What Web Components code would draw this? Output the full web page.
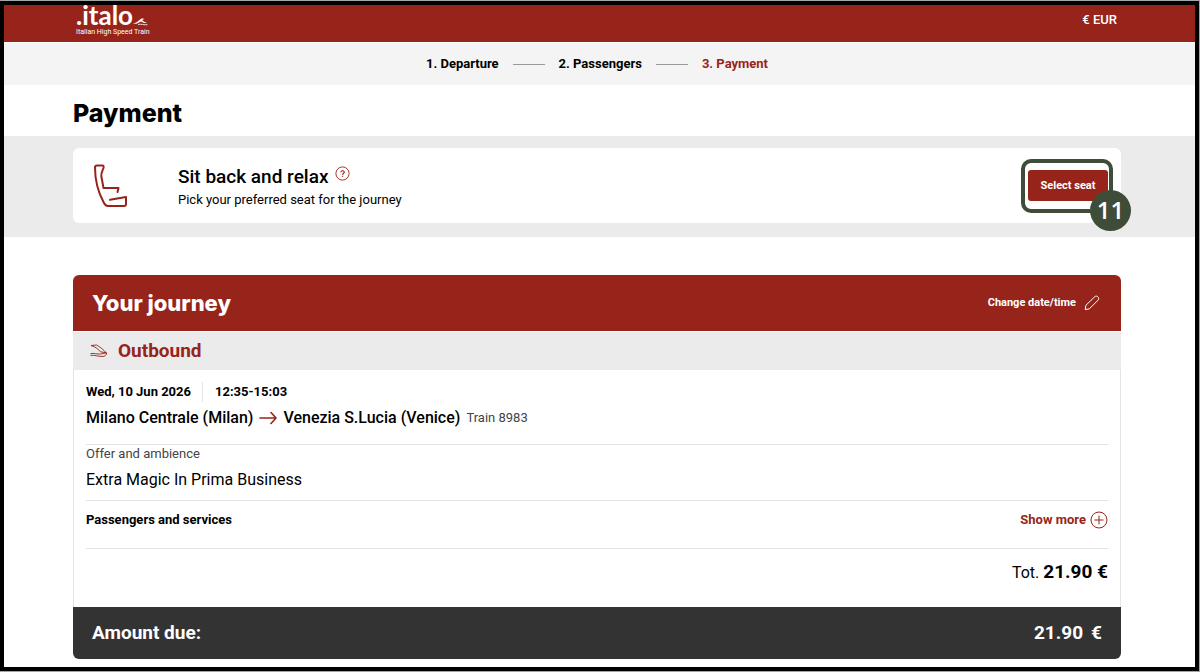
<!DOCTYPE html>
<html lang="en">
<head>
<meta charset="utf-8">
<title>Italo – Payment</title>
<style>
  :root { --red: #97241a; --band: #ebebeb; --line: #e4e4e4; --start: 69px; --end: 74px; }
  html { background: #a4a6a3; }
  body { margin: 0; padding: 1px 1px 1px 0; font: 13px/18px Roboto, sans-serif; color: #000; }
</style>
</head>
<body>
<booking-page>
  <site-header slot="header" currency="€ EUR"></site-header>
  <step-bar slot="header"></step-bar>
  <page-title>Payment</page-title>
  <seat-banner>
    <span slot="title">Sit back and relax</span>
    <span slot="text">Pick your preferred seat for the journey</span>
    <callout-mark slot="action" number="11"><red-button>Select seat</red-button></callout-mark>
  </seat-banner>
  <journey-card>
    <span slot="heading">Your journey</span>
    <journey-leg date="Wed, 10 Jun 2026" time="12:35-15:03" from="Milano Centrale (Milan)" to="Venezia S.Lucia (Venice)" train="Train 8983"></journey-leg>
    <journey-offer>
      <span slot="label">Offer and ambience</span>
      <span>Extra Magic In Prima Business</span>
    </journey-offer>
    <passenger-services>Passengers and services</passenger-services>
    <journey-total>21.90 €</journey-total>
    <amount-due slot="footer" amount="21.90" currency="€">Amount due:</amount-due>
  </journey-card>
</booking-page>

<script>
const define = (name, render) => customElements.define(name, class extends HTMLElement {
  constructor() { super(); this.attachShadow({ mode: 'open' }); }
  connectedCallback() {
    const template = document.createElement('template');
    template.innerHTML = `<style>
      * { box-sizing: border-box; }
      :host { display: block; box-sizing: border-box; }
      h1, h2, h3, p, ol { margin: 0; padding: 0; font-size: inherit; }
      button { font: inherit; color: inherit; background: none; border: 0; padding: 0; cursor: pointer; }
      svg { display: block; flex: none; fill: none; stroke: currentColor; }
    </style>` + render(this);
    this.shadowRoot.replaceChildren(template.content.cloneNode(true));
  }
});

define('booking-page', () => `
  <style>
    :host { background: #fff; border: 4px solid #000; min-height: calc(100vh - 2px); }
    main { padding-bottom: 8px; }
  </style>
  <slot name="header"></slot>
  <main><slot></slot></main>`);

define('site-header', el => `
  <style>
    :host { background: var(--red); color: #fff; }
    header { display: flex; justify-content: space-between; align-items: flex-start; height: 37px; padding: 0 78px 0 72px; }
    a { color: inherit; text-decoration: none; display: block; }
    .name { display: flex; align-items: flex-end; font: 700 26px/21px Lato, sans-serif; }
    .tag { display: block; font-size: 7px; line-height: 12px; }
    button { font-weight: 500; line-height: 29px; }
  </style>
  <header>
    <a href="#"><span class="name">.italo<svg width="15" height="9" viewBox="0 0 15 9" aria-hidden="true"><path d="M0 6.500C4 6 5.500 3.500 8.500 1.500l3 .300-2.500 1.500c2 1.500 3.500 2.500 6 2.700-3 .400-5.500-.700-7-1.600C5.500 5.500 3.500 7.500 0 6.500z" fill="currentColor" stroke="none"/><path d="M5 7.500c3-.900 6 .700 9.500.200" stroke-width=".8"/></svg></span>
    <span class="tag">Italian High Speed Train</span></a>
    <button type="button">${el.getAttribute('currency')}</button>
  </header>`);

define('step-bar', () => `
  <style>
    :host { background: #f4f4f4; margin-top: 1px; padding: 0 var(--end) 0 var(--start); }
    ol { list-style: none; display: flex; justify-content: center; align-items: center; gap: 14px; line-height: 42px; font-weight: 700; }
    li { display: flex; align-items: center; gap: 14px; }
    li + li::before { content: ""; width: 32px; height: 1px; background: #999; }
    [aria-current] { color: var(--red); }
  </style>
  <nav aria-label="Booking steps"><ol>
    <li>1. Departure</li><li>2. Passengers</li><li aria-current="step">3. Payment</li>
  </ol></nav>`);

define('page-title', () => `
  <style>
    :host { padding: 13px var(--end) 7px var(--start); }
    h1 { font: 800 25px/31px Inter, sans-serif; }
  </style>
  <h1><slot></slot></h1>`);

define('seat-banner', () => `
  <style>
    :host { background: var(--band); padding: 12px var(--end) 14px var(--start); }
    section { display: flex; align-items: center; min-height: 75px; padding: 0 13px 0 20px; background: #fff; border-radius: 6px; }
    .seat { color: var(--red); margin-right: 49px; }
    .copy { flex: 1; padding-top: 2px; }
    .row { display: flex; align-items: flex-start; gap: 7px; }
    h2 { font-weight: 500; font-size: 19px; line-height: 26px; }
    p { line-height: 20px; }
    .help { color: var(--red); padding-top: 2px; }
  </style>
  <section>
    <svg class="seat" width="36" height="44" viewBox="0 0 36 44" stroke-width="2" stroke-linejoin="round" stroke-linecap="round" aria-hidden="true">
      <path d="M2 3.500Q2 1.500 4 1.500H9.500Q11 1.500 10.500 4C9.500 7 8 9 8.300 12L10.500 24H25.500L24.500 28M17 35.800L33 33V40Q33 42 31 42H15Q12.500 42 11 39C6 30 2 18 2 3.500"/>
    </svg>
    <div class="copy">
      <div class="row"><h2><slot name="title"></slot></h2>
        <button class="help" type="button" aria-label="Help">
          <svg width="15" height="15" viewBox="0 0 15 15"><circle cx="7.500" cy="7.500" r="6.600" stroke-width=".9"/><path d="M5.900 6.300c0-2.100 3.400-2.100 3.300 0 0 1.200-1.600 1.100-1.600 2.400M7.600 9.700v1.100" stroke-width="1.200"/></svg>
        </button>
      </div>
      <p><slot name="text"></slot></p>
    </div>
    <slot name="action"></slot>
  </section>`);

define('red-button', () => `
  <style>
    button { display: block; min-width: 80px; padding: 0 12px; background: var(--red); color: #fff; border-radius: 3px; font-weight: 700; font-size: 11px; line-height: 31px; white-space: nowrap; }
  </style>
  <button type="button"><slot></slot></button>`);

/* Tutorial marker: a ring round the slotted control and a numbered badge on its corner. */
define('callout-mark', el => `
  <style>
    :host { position: relative; }
    .ring { position: absolute; inset: -11px -5px -12px -7px; border: 4px solid #3f4c38; border-radius: 10px; pointer-events: none; }
    .badge { position: absolute; right: -23px; bottom: -30px; width: 41px; height: 41px; border-radius: 50%; background: #3f4c38; color: #fff; text-align: center; font: 600 24px/40px "Open Sans", sans-serif; }
  </style>
  <slot></slot><div class="ring"></div><div class="badge">${el.getAttribute('number')}</div>`);

define('journey-card', () => `
  <style>
    :host { padding: 38px var(--end) 0 var(--start); }
    article { border-radius: 6px; overflow: hidden; }
    header { display: flex; justify-content: space-between; align-items: center; height: 56px; padding: 0 21px 0 19px; background: var(--red); color: #fff; }
    h2 { font: 800 22px/28px Inter, sans-serif; }
    header button { display: flex; align-items: center; gap: 8px; font-weight: 700; font-size: 11px; }
    .out { display: flex; align-items: center; gap: 10px; height: 38px; margin-top: 1px; padding: 0 17px; background: var(--band); color: var(--red); }
    h3 { font-weight: 700; font-size: 19px; line-height: 38px; }
    .body { padding: 0 12px; border: solid var(--line); border-width: 0 1px; }
  </style>
  <article>
    <header><h2><slot name="heading"></slot></h2>
      <button type="button">Change date/time
        <svg width="16" height="16" viewBox="0 0 16 16" stroke-linejoin="round"><path d="M1.200 14.600L1.900 10.300 10.900 1.600C12.800-.100 16 2.900 14.200 5L5.300 13.900z"/></svg>
      </button>
    </header>
    <div class="out">
      <svg width="18" height="14" viewBox="0 0 18 14" stroke-width=".9" stroke-linejoin="round" aria-hidden="true"><path d="M1 1.500L6.500 1C10 3 14 6 16.300 8.800L10.500 7.800C8.500 5.500 6 3 1 1.500zM.5 9.600C4 9 7 10.200 10.500 10L16.300 8.800 16.600 10.300 14 12.400C8 12.800 5 10.700.5 11.400"/></svg>
      <h3>Outbound</h3>
    </div>
    <div class="body"><slot></slot></div>
    <slot name="footer"></slot>
  </article>`);

define('journey-leg', el => `
  <style>
    :host { padding: 12px 0 13px; border-bottom: 1px solid var(--line); }
    .when { display: flex; line-height: 20px; font-weight: 700; }
    .when span + span { margin-left: 11px; padding-left: 12px; border-left: 1px solid var(--line); }
    .route { display: flex; align-items: center; gap: 6px; margin-top: 3px; font-weight: 500; font-size: 16px; line-height: 26px; }
    .route svg { color: var(--red); }
    small { font-weight: 400; font-size: 13px; color: #444; }
  </style>
  <div class="when"><span>${el.getAttribute('date')}</span><span>${el.getAttribute('time')}</span></div>
  <div class="route"><span>${el.getAttribute('from')}</span>
    <svg width="18" height="14" viewBox="0 0 18 14" stroke-width="1.600" stroke-linecap="round" stroke-linejoin="round" role="img" aria-label="to"><path d="M1 7h16M12 1.500L17 7l-5 5.500"/></svg>
    <span>${el.getAttribute('to')}</span><small>${el.getAttribute('train')}</small></div>`);

define('journey-offer', () => `
  <style>
    :host { padding-bottom: 7px; border-bottom: 1px solid var(--line); }
    .label { color: #444; }
    .value { margin-top: 4px; font-size: 16px; line-height: 26px; }
  </style>
  <p class="label"><slot name="label"></slot></p>
  <p class="value"><slot></slot></p>`);

define('passenger-services', () => `
  <style>
    :host { display: flex; justify-content: space-between; align-items: center; padding-bottom: 9px; border-bottom: 1px solid var(--line); line-height: 38px; font-weight: 700; }
    button { display: flex; align-items: center; gap: 4px; color: var(--red); }
  </style>
  <span><slot></slot></span>
  <button type="button" aria-expanded="false">Show more
    <svg width="18" height="18" viewBox="0 0 18 18"><circle cx="9" cy="9" r="8"/><path d="M9 4.500v9M4.500 9h9"/></svg>
  </button>`);

define('journey-total', () => `
  <style>
    :host { padding-bottom: 12px; text-align: right; font-size: 16px; line-height: 46px; }
    p { height: 46px; }
    strong { font-size: 19px; }
  </style>
  <p>Tot. <strong><slot></slot></strong></p>`);

define('amount-due', el => `
  <style>
    :host { display: flex; justify-content: space-between; padding: 0 19px; background: #333; color: #fff; font-weight: 700; font-size: 19px; line-height: 52px; }
    .sum { display: flex; gap: 8px; }
  </style>
  <span><slot></slot></span>
  <span class="sum"><span>${el.getAttribute('amount')}</span><span>${el.getAttribute('currency')}</span></span>`);
</script>
</body>
</html>
